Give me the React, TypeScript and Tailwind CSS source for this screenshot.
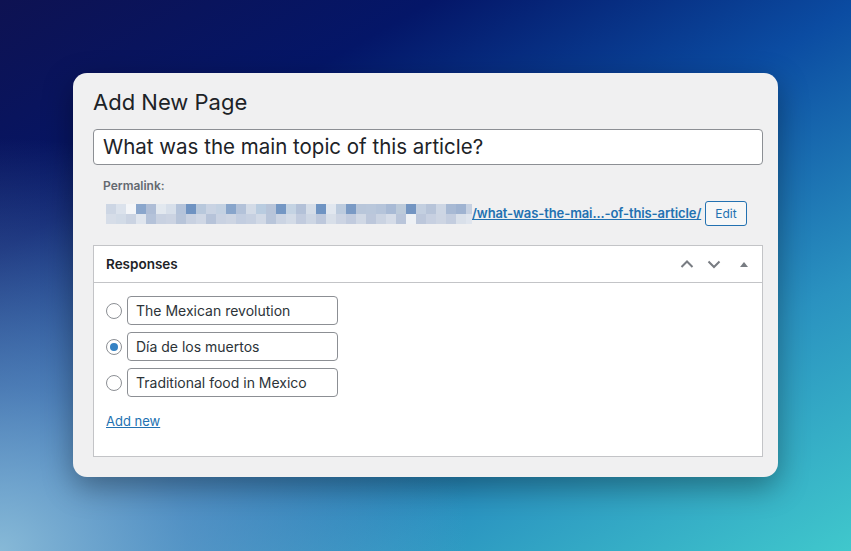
import React from "react";

const top = [
  "#cdd6e4","#dbe2ec","#f3f5f8","#8aa6cc","#aebdd6","#e2e8ef","#d7dfea","#b4c3da","#6f93c2","#b8c8dc",
  "#c9d3e3","#c3d1e2","#88a5cb","#b3c2d9","#d3dbe7","#b9cce0","#b7c4d9","#7497c4","#c4d3e3","#b3c1d8",
  "#d5dde8","#6f94c3","#e1e7ef","#bccbde","#7a9ac5","#b8c6da","#b9c7db","#b5c4da","#a8bad5","#bccada",
  "#7395c2","#c3cfe0","#b7c4d9","#cdd6e4","#a7b9d4","#9fb3d1","#c6d1e2"
];
const bottom = [
  "#d6dde8","#d2dbe7","#cad3e2","#dfe5ee","#b4c2d9","#c8d1e1","#cbd3e2","#b7c4d9","#c8d1e1","#cfd7e5",
  "#b6c3d9","#c9d2e2","#cdd5e3","#c2cde0","#c6d0e1","#d1d9e6","#b8c5da","#cbd4e3","#d3dbe7","#c1cbde",
  "#cdd6e4","#bdc8dc","#d8dfe9","#ccd4e3","#c1cbde","#d0d8e5","#bcc7db","#cad3e2","#d5dce8","#b9c5da",
  "#eef1f5","#bcc7db","#c7d0e1","#cdd5e3","#c3cddf","#d9e0ea","#dfe5ee"
];

function Radio({ checked }: { checked?: boolean }) {
  return (
    <span className="w-4 h-4 rounded-full border border-[#8c8f94] bg-white flex items-center justify-center shrink-0">
      {checked && <span className="w-2 h-2 rounded-full bg-[#3582c4]" />}
    </span>
  );
}

function Row({ text, checked }: { text: string; checked?: boolean }) {
  return (
    <div className="flex items-center gap-[5px]">
      <Radio checked={checked} />
      <div className="w-[211px] h-[29px] border border-[#8c8f94] rounded-[4px] bg-white flex items-center px-[8px] text-[14px] text-[#2c3338]">
        {text}
      </div>
    </div>
  );
}

export default function App() {
  return (
    <div
      className="w-[851px] h-[551px] overflow-hidden relative bg-[radial-gradient(ellipse_55%_75%_at_0%_100%,rgba(135,185,215,1)_0%,rgba(120,170,210,0.6)_40%,rgba(120,170,210,0)_100%),linear-gradient(150deg,#0e1252_0%,#041668_24%,#0b4ca2_48%,#2a92c0_74%,#40c8cc_100%)] pt-[73px] pl-[73px]"
      style={{ fontFamily: "Inter, 'Noto Sans', sans-serif" }}
    >
      <div className="w-[705px] h-[404px] bg-[#f0f0f1] rounded-[14px] shadow-[0_10px_30px_rgba(0,0,0,0.35)] px-[20px] pt-[15px]">
        <h1 className="text-[22px] leading-[28px] text-[#1d2327] font-normal">Add New Page</h1>
        <div className="mt-[13px] h-[36px] w-[670px] bg-white border border-[#8c8f94] rounded-[4px] flex items-center px-[9px] text-[20.5px] text-[#1d2327]">
          What was the main topic of this article?
        </div>
        <div className="pl-[10px] mt-[13px]">
          <div className="text-[12px] leading-[16px] font-semibold text-[#646970]">Permalink:</div>
          <div className="flex items-center mt-[7px]">
            <div className="ml-[3px] flex flex-col w-[366px] overflow-hidden">
              <div className="flex">
                {top.map((c, i) => (
                  <div key={i} className="w-[10px] h-[10px] shrink-0" style={{ backgroundColor: c }} />
                ))}
              </div>
              <div className="flex">
                {bottom.map((c, i) => (
                  <div key={i} className="w-[10px] h-[10px] shrink-0" style={{ backgroundColor: c }} />
                ))}
              </div>
            </div>
            <a className="text-[13px] font-semibold text-[#2271b1] underline tracking-[-0.1px]">
              /what-was-the-mai...-of-this-article/
            </a>
            <div className="ml-[4px] h-[25px] px-[9px] border border-[#2271b1] rounded-[3px] bg-[#f6f7f7] text-[12px] text-[#2271b1] flex items-center">
              Edit
            </div>
          </div>
        </div>
        <div className="mt-[19px] w-[670px] h-[212px] bg-white border border-[#c3c4c7]">
          <div className="h-[37px] border-b border-[#c3c4c7] flex items-center pl-[12px] pr-[12px]">
            <div className="text-[13.5px] font-semibold text-[#1d2327]">Responses</div>
            <div className="ml-auto flex items-center">
              <svg width="16" height="16" viewBox="0 0 16 16" className="mr-[11px]">
                <path d="M2.5 11 L8 5.5 L13.5 11" fill="none" stroke="#787c82" strokeWidth="2" />
              </svg>
              <svg width="16" height="16" viewBox="0 0 16 16" className="mr-[16px]">
                <path d="M2.5 5.5 L8 11 L13.5 5.5" fill="none" stroke="#787c82" strokeWidth="2" />
              </svg>
              <svg width="12" height="12" viewBox="0 0 12 12">
                <path d="M2 9 L6 4 L10 9 Z" fill="#787c82" />
              </svg>
            </div>
          </div>
          <div className="pl-[12px] pt-[13px] flex flex-col gap-[7px]">
            <Row text="The Mexican revolution" />
            <Row text="Día de los muertos" checked />
            <Row text="Traditional food in Mexico" />
            <a className="mt-[8px] text-[13px] text-[#2271b1] underline self-start">Add new</a>
          </div>
        </div>
      </div>
    </div>
  );
}
